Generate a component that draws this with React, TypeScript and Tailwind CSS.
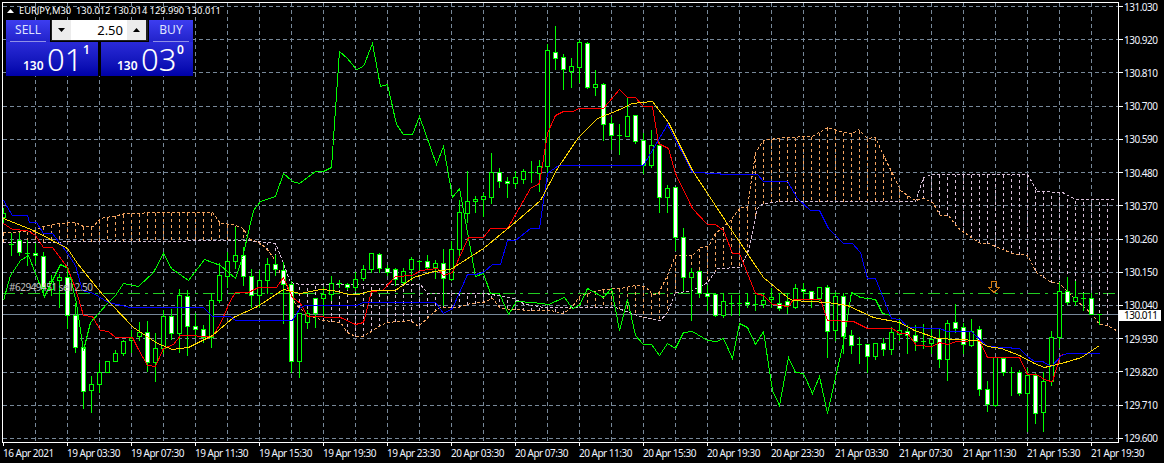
type Pt = [number, number];

// x, high, body top, body bottom, low, white body
const candles: [number, number, number, number, number, number][] = [
  [3, 208, 213, 217, 222, 0], [11, 233, 244, 244, 255, 0], [19, 233, 240, 252, 255, 1], [27, 240, 253, 253, 265, 0],
  [35, 243, 253, 255, 263, 1], [43, 252, 256, 287, 295, 1], [51, 275, 281, 289, 295, 0], [59, 274, 277, 280, 307, 0],
  [67, 267, 277, 315, 328, 1], [75, 303, 315, 347, 352, 1], [83, 347, 347, 391, 408, 1], [91, 376, 384, 390, 412, 0],
  [99, 363, 372, 384, 392, 0], [107, 361, 361, 372, 372, 0], [115, 350, 353, 361, 361, 0], [123, 340, 341, 353, 355, 0],
  [131, 330, 338, 340, 352, 0], [139, 322, 332, 336, 340, 0], [147, 321, 332, 362, 371, 1], [155, 333, 348, 362, 381, 0],
  [163, 310, 316, 348, 353, 0], [171, 309, 316, 333, 339, 1], [179, 289, 295, 333, 352, 0], [187, 290, 296, 326, 355, 1],
  [195, 313, 326, 329, 337, 1], [203, 325, 329, 337, 342, 1], [211, 293, 300, 337, 347, 0], [219, 263, 275, 300, 302, 0],
  [227, 252, 261, 276, 287, 0], [235, 227, 255, 261, 268, 0], [243, 247, 255, 276, 285, 1], [251, 269, 276, 295, 307, 1],
  [259, 270, 280, 295, 307, 0], [267, 258, 264, 280, 293, 0], [275, 255, 264, 269, 275, 1], [283, 262, 270, 284, 323, 1],
  [291, 281, 284, 361, 372, 1], [299, 313, 313, 361, 377, 0], [307, 310, 313, 322, 328, 0], [315, 298, 298, 313, 327, 1],
  [323, 287, 294, 298, 315, 0], [331, 276, 283, 294, 300, 0], [339, 280, 283, 283, 287, 0], [347, 283, 284, 287, 289, 1],
  [355, 272, 279, 287, 290, 0], [363, 265, 269, 278, 280, 0], [371, 253, 253, 269, 272, 0], [379, 253, 254, 268, 272, 1],
  [387, 265, 268, 272, 275, 1], [395, 268, 269, 279, 285, 1], [403, 268, 271, 282, 283, 0], [411, 257, 259, 269, 280, 0],
  [419, 260, 261, 261, 269, 0], [427, 255, 261, 267, 269, 1], [435, 260, 263, 267, 278, 0], [443, 249, 263, 278, 305, 1],
  [451, 241, 249, 279, 280, 0], [459, 200, 212, 249, 255, 0], [467, 171, 201, 213, 222, 0], [475, 196, 199, 201, 212, 0],
  [483, 193, 196, 199, 216, 0], [491, 153, 172, 197, 203, 0], [499, 168, 172, 181, 187, 1], [507, 177, 181, 183, 197, 1],
  [515, 171, 177, 183, 187, 0], [523, 169, 171, 179, 183, 0], [531, 161, 172, 172, 182, 0], [539, 160, 166, 173, 191, 0],
  [547, 44, 50, 166, 173, 0], [555, 26, 52, 58, 69, 1], [563, 54, 57, 69, 89, 1], [571, 58, 66, 71, 87, 0],
  [579, 40, 42, 67, 82, 0], [587, 42, 43, 87, 88, 1], [595, 70, 84, 87, 95, 0], [603, 83, 84, 124, 140, 1],
  [611, 117, 123, 135, 149, 1], [619, 124, 135, 135, 154, 0], [627, 98, 116, 136, 136, 0], [635, 115, 115, 141, 143, 1],
  [643, 133, 140, 165, 173, 1], [651, 130, 145, 165, 167, 0], [659, 142, 145, 197, 212, 1], [667, 185, 188, 197, 212, 0],
  [675, 187, 187, 237, 250, 1], [683, 228, 237, 277, 290, 1], [691, 268, 272, 277, 320, 0], [699, 270, 271, 293, 297, 1],
  [707, 285, 293, 296, 310, 1], [715, 293, 294, 315, 316, 1], [723, 293, 301, 315, 317, 0], [731, 295, 303, 303, 315, 0],
  [739, 295, 303, 303, 315, 0], [747, 293, 302, 304, 307, 1], [755, 295, 304, 304, 310, 0], [763, 293, 300, 304, 307, 0],
  [771, 288, 297, 299, 307, 0], [779, 293, 303, 308, 310, 1], [787, 293, 301, 305, 313, 1], [795, 284, 288, 307, 308, 0],
  [803, 283, 289, 291, 298, 1], [811, 291, 291, 299, 307, 1], [819, 287, 287, 298, 300, 0], [827, 285, 287, 331, 357, 1],
  [835, 292, 296, 330, 340, 0], [843, 293, 296, 336, 353, 1], [851, 330, 335, 345, 353, 1], [859, 337, 344, 344, 363, 0],
  [867, 344, 344, 356, 372, 1], [875, 343, 343, 356, 359, 0], [883, 338, 343, 349, 355, 1], [891, 327, 332, 349, 354, 0],
  [899, 318, 330, 334, 340, 0], [907, 325, 331, 335, 353, 1], [915, 325, 335, 341, 350, 1], [923, 324, 341, 341, 348, 0],
  [931, 328, 339, 343, 353, 0], [939, 328, 338, 359, 367, 1], [947, 320, 323, 359, 380, 0], [955, 304, 322, 328, 332, 1],
  [963, 323, 327, 344, 353, 1], [971, 319, 331, 345, 346, 0], [979, 326, 329, 389, 395, 1], [987, 381, 389, 404, 411, 1],
  [995, 357, 357, 405, 406, 0], [1003, 358, 358, 372, 375, 1], [1011, 367, 372, 372, 395, 0], [1019, 370, 372, 393, 395, 1],
  [1027, 368, 375, 393, 431, 0], [1035, 373, 375, 413, 423, 1], [1043, 372, 381, 412, 431, 0], [1051, 331, 337, 381, 385, 0],
  [1059, 282, 291, 337, 347, 0], [1067, 277, 291, 302, 304, 1], [1075, 281, 297, 301, 305, 0], [1083, 293, 298, 298, 310, 0],
  [1091, 293, 298, 314, 314, 1], [1099, 314, 314, 314, 324, 0],
];

const blue: Pt[] = [
  [3, 200], [12, 215], [27, 215], [29, 222], [36, 222], [43, 233], [52, 233], [65, 250], [75, 265], [82, 290], [93, 293], [108, 302], [130, 307], [203, 307], [212, 316], [230, 316], [235, 320], [292, 320], [300, 307], [305, 305], [357, 305], [362, 302], [435, 302], [443, 313], [452, 308], [467, 274], [475, 274], [483, 272], [492, 264], [500, 264], [507, 240], [515, 240], [530, 228], [539, 228], [547, 173], [558, 165], [643, 165], [667, 124], [692, 172], [717, 173], [723, 174], [757, 174], [763, 181], [787, 181], [797, 198], [810, 210], [819, 210], [828, 228], [843, 243], [852, 243], [860, 252], [867, 278], [875, 278], [891, 318], [900, 319], [907, 327], [939, 328], [947, 331], [971, 331], [987, 346], [1019, 348], [1027, 356], [1034, 361], [1042, 361], [1051, 366], [1061, 355], [1067, 353], [1099, 353],
];

const red: Pt[] = [
  [3, 223], [12, 229], [27, 230], [35, 235], [43, 247], [52, 247], [67, 267], [75, 288], [83, 315], [92, 316], [100, 330], [108, 331], [115, 337], [132, 337], [137, 347], [147, 365], [155, 366], [163, 348], [173, 344], [180, 335], [212, 336], [220, 323], [230, 300], [235, 292], [248, 292], [258, 287], [276, 287], [283, 277], [292, 297], [300, 303], [307, 316], [340, 317], [355, 324], [363, 322], [371, 291], [382, 290], [395, 276], [412, 275], [420, 270], [437, 268], [443, 275], [452, 272], [468, 237], [483, 237], [490, 228], [507, 228], [530, 188], [539, 183], [547, 133], [555, 115], [563, 111], [572, 111], [579, 108], [603, 108], [619, 89], [627, 97], [635, 97], [643, 106], [652, 106], [658, 143], [668, 148], [675, 173], [692, 208], [707, 224], [715, 224], [723, 230], [732, 253], [739, 253], [755, 293], [763, 295], [772, 304], [788, 306], [793, 299], [820, 299], [827, 320], [853, 321], [867, 328], [892, 328], [899, 333], [907, 333], [916, 345], [932, 346], [939, 342], [947, 344], [956, 341], [979, 340], [987, 357], [1019, 357], [1027, 374], [1036, 374], [1046, 380], [1052, 381], [1060, 355], [1067, 353], [1099, 353],
];

const gold: Pt[] = [
  [3, 218], [33, 230], [67, 248], [77, 263], [97, 288], [110, 303], [133, 327], [157, 343], [172, 349], [188, 347], [212, 335], [233, 317], [257, 306], [283, 289], [300, 293], [320, 289], [333, 290], [348, 294], [358, 294], [372, 290], [395, 290], [413, 277], [433, 271], [450, 269], [483, 248], [517, 220], [540, 200], [557, 168], [578, 137], [597, 118], [617, 110], [632, 103], [652, 101], [668, 122], [692, 170], [730, 228], [763, 277], [787, 297], [792, 300], [827, 302], [847, 305], [873, 317], [899, 322], [914, 330], [937, 338], [977, 340], [987, 346], [1001, 348], [1019, 355], [1034, 363], [1044, 367], [1052, 365], [1061, 363], [1081, 357], [1099, 345],
];

const chikou: Pt[] = [
  [3, 300], [10, 275], [20, 260], [28, 255], [44, 296], [60, 264], [68, 268], [76, 303], [83, 350], [90, 322], [107, 303], [115, 295], [123, 283], [138, 286], [153, 272], [163, 253], [171, 268], [188, 280], [204, 259], [220, 265], [235, 278], [242, 257], [253, 210], [260, 201], [275, 196], [283, 173], [292, 181], [299, 183], [315, 171], [323, 171], [331, 167], [339, 51], [347, 58], [356, 69], [363, 66], [372, 43], [380, 86], [387, 84], [396, 124], [403, 134], [412, 134], [419, 116], [436, 164], [443, 146], [452, 197], [459, 188], [475, 276], [483, 273], [490, 293], [499, 293], [508, 314], [516, 301], [532, 302], [548, 304], [564, 297], [572, 308], [579, 305], [587, 288], [603, 297], [611, 288], [619, 330], [627, 299], [635, 335], [643, 344], [651, 344], [659, 355], [667, 343], [675, 348], [683, 332], [692, 331], [707, 340], [716, 341], [723, 338], [732, 358], [739, 323], [747, 327], [755, 344], [763, 331], [772, 390], [779, 405], [788, 357], [795, 372], [803, 373], [812, 393], [819, 376], [827, 413], [835, 377], [843, 342], [851, 292], [860, 297], [875, 299], [882, 313], [891, 315],
];

const spanA: Pt[] = [
  [3, 232], [33, 231], [42, 226], [58, 223], [75, 222], [83, 226], [93, 226], [100, 218], [117, 215], [125, 213], [163, 212], [212, 212], [220, 223], [233, 224], [243, 228], [248, 238], [258, 242], [265, 247], [273, 257], [283, 280], [296, 305], [310, 316], [323, 320], [340, 322], [347, 332], [355, 336], [363, 336], [380, 325], [387, 322], [410, 320], [418, 326], [433, 312], [440, 307], [458, 307], [470, 303], [483, 302], [492, 298], [500, 308], [530, 310], [550, 310], [563, 313], [572, 306], [580, 295], [602, 289], [620, 288], [635, 285], [645, 286], [652, 294], [658, 293], [667, 275], [675, 255], [692, 255], [700, 247], [708, 246], [715, 233], [730, 220], [740, 207], [747, 207], [755, 152], [763, 140], [783, 137], [812, 136], [827, 127], [843, 132], [852, 133], [858, 129], [867, 138], [875, 137], [883, 155], [892, 173], [900, 190], [907, 195], [915, 200], [923, 198], [932, 202], [940, 215], [948, 215], [957, 227], [972, 238], [980, 243], [988, 243], [1012, 253], [1027, 255], [1036, 272], [1051, 282], [1059, 283], [1076, 300], [1091, 313], [1099, 324], [1107, 325], [1116, 330],
];

const spanB: Pt[] = [
  [3, 242], [248, 240], [275, 243], [283, 263], [290, 282], [300, 284], [420, 284], [423, 288], [428, 293], [485, 293], [497, 295], [513, 298], [523, 303], [543, 307], [615, 307], [640, 316], [660, 320], [667, 312], [675, 292], [690, 291], [707, 282], [717, 268], [740, 267], [748, 250], [757, 208], [763, 203], [780, 201], [915, 201], [923, 177], [932, 174], [1027, 174], [1037, 191], [1062, 192], [1075, 199], [1115, 199],
];

const priceLabels = ["131.030", "130.920", "130.810", "130.700", "130.590", "130.480", "130.370", "130.260", "130.150", "130.040", "129.930", "129.820", "129.710", "129.600"];
const timeLabels = ["16 Apr 2021", "19 Apr 03:30", "19 Apr 07:30", "19 Apr 11:30", "19 Apr 15:30", "19 Apr 19:30", "19 Apr 23:30", "20 Apr 03:30", "20 Apr 07:30", "20 Apr 11:30", "20 Apr 15:30", "20 Apr 19:30", "20 Apr 23:30", "21 Apr 03:30", "21 Apr 07:30", "21 Apr 11:30", "21 Apr 15:30", "21 Apr 19:30"];

const toPoints = (pts: Pt[]) => pts.map(([x, y]) => `${x + 0.5},${y + 0.5}`).join(" ");

function valueAt(pts: Pt[], x: number) {
  for (let i = 1; i < pts.length; i++) {
    if (x <= pts[i][0]) {
      const [x0, y0] = pts[i - 1];
      const [x1, y1] = pts[i];
      return y0 + ((y1 - y0) * (x - x0)) / (x1 - x0);
    }
  }
  return pts[pts.length - 1][1];
}

const hatchX = Array.from({ length: 139 }, (_, k) => 3 + 8 * k);
const gridX = Array.from({ length: 35 }, (_, k) => 35.5 + 32 * k);
const gridY = Array.from({ length: 14 }, (_, k) => Math.round(6 + 33.23 * k) + 0.5);

function Chart() {
  return (
    <svg className="block" width={1115} height={439} viewBox="3 3 1115 439" shapeRendering="crispEdges" fill="none">
      {gridX.map((x) => (
        <line key={x} x1={x} x2={x} y1={3} y2={442} stroke="#778899" strokeDasharray="4 3" />
      ))}
      {gridY.map((y) => (
        <line key={y} x1={3} x2={1118} y1={y} y2={y} stroke="#778899" strokeDasharray="4 3" />
      ))}
      <line x1={3} x2={1118} y1={293.5} y2={293.5} stroke="#22cc22" strokeDasharray="12 5 3 5" />
      <line x1={3} x2={1118} y1={314.5} y2={314.5} stroke="#778899" />
      {hatchX.map((x) => {
        const a = valueAt(spanA, x);
        const b = valueAt(spanB, x);
        return (
          <line key={x} x1={x + 0.5} x2={x + 0.5} y1={Math.round(a) + 0.5} y2={Math.round(b) + 0.5} stroke={a < b ? "#f4a460" : "#d8bfd8"} strokeDasharray="3 3" />
        );
      })}
      <polyline points={toPoints(spanA)} stroke="#f4a460" strokeDasharray="3 2" />
      <polyline points={toPoints(spanB)} stroke="#d8bfd8" strokeDasharray="3 2" />
      {candles.map(([x, hi, top, bot, lo, white]) => (
        <g key={x} stroke="#00ff00">
          <line x1={x + 0.5} x2={x + 0.5} y1={hi} y2={lo + 1} />
          {top === bot ? (
            <line x1={x - 2} x2={x + 3} y1={top + 0.5} y2={top + 0.5} />
          ) : (
            <rect x={x - 1.5} y={top + 0.5} width={4} height={bot - top} fill={white ? "#ffffff" : "#000000"} />
          )}
        </g>
      ))}
      <polyline points={toPoints(chikou)} stroke="#00ff00" />
      <polyline points={toPoints(red)} stroke="#ff0000" />
      <polyline points={toPoints(blue)} stroke="#0000ff" />
      <polyline points={toPoints(gold)} stroke="#ffd700" />
      <path d="M991.5 281.5h5v6h3l-5.5 5-5.500-5h3z" stroke="#d07a10" />
    </svg>
  );
}

function PriceBox({ big, small, left }: { big: string; small: string; left: string }) {
  return (
    <div className={`flex h-[34px] w-[92px] items-start bg-gradient-to-b from-[#2a2ad8] to-[#0000a8] tracking-normal text-white ${left}`}>
      <span className="mt-[16px] w-[24px] flex-none text-[12px] leading-[16px] font-semibold">130</span>
      <span className="w-[36px] flex-none text-[31px] leading-[34px] font-light">{big}</span>
      <span className="mt-[1px] text-[12px] leading-[14px] font-semibold">{small}</span>
    </div>
  );
}

function TradeButton({ label }: { label: string }) {
  return (
    <div className="flex h-[23px] w-[44px] flex-col items-center bg-gradient-to-b from-[#3d3df0] to-[#2020c8] text-[12px] leading-[20px] tracking-normal text-[#dfe2ff]">
      <span className="h-[21px]">{label}</span>
      <span className="h-px w-[36px] bg-[#8f8fe8]" />
    </div>
  );
}

function SpinButton({ up }: { up?: boolean }) {
  return (
    <div className="flex h-[20px] w-[19px] items-center justify-center bg-[#ececec]">
      <svg width={7} height={4} viewBox="0 0 7 4">
        <path d={up ? "M3.5 0 7 4H0z" : "M0 0h7L3.500 4z"} fill="#000000" />
      </svg>
    </div>
  );
}

function TradePanel() {
  return (
    <div className="absolute top-[17px] left-[3px] flex w-[187px] flex-col bg-[#000000]">
      <div className="flex h-[22px] items-start justify-between">
        <TradeButton label="SELL" />
        <div className="flex h-[21px] w-[97px] items-start bg-[#202020] px-px">
          <SpinButton />
          <div className="h-[20px] w-[56px] bg-white pr-[4px] text-right text-[13px] leading-[20px] tracking-normal text-black">2.50</div>
          <SpinButton up />
        </div>
        <TradeButton label="BUY" />
      </div>
      <div className="flex justify-between">
        <PriceBox big="01" small="1" left="pl-[17px]" />
        <PriceBox big="03" small="0" left="pl-[16px]" />
      </div>
    </div>
  );
}

export default function App() {
  return (
    <div className="h-[463px] w-[1164px] overflow-hidden bg-black text-[10px] tracking-[-0.5px] text-white" style={{ fontFamily: '"Noto Sans", sans-serif' }}>
      <div className="flex h-[443px] pt-[2px] pl-[2px]">
        <div className="relative h-[441px] w-[1117px] flex-none border border-white">
          <Chart />
          <div className="absolute top-[1px] left-[4px] flex items-center gap-[5px] text-[9.3px] leading-[14px] tracking-normal whitespace-pre">
            <svg width={7} height={4} viewBox="0 0 7 4">
              <path d="M3.5 0 7 4H0z" fill="#ffffff" />
            </svg>
            <span>EURJPY,M30  130.012 130.014 129.990 130.011</span>
          </div>
          <TradePanel />
          <div className="absolute top-[277px] left-[6px] leading-[14px] text-[#c0c0c0]">#62949451 sell 2.50</div>
        </div>
        <div className="relative -mt-[12.1px] flex flex-col">
          {priceLabels.map((label) => (
            <div key={label} className="flex h-[33.23px] flex-none items-center">
              <span className="h-px w-[4px] bg-white" />
              <span className="ml-[1px] leading-[14px] text-[#f0f4ff]">{label}</span>
            </div>
          ))}
          <div className="absolute top-[320px] left-0 h-[11px] w-[42px] bg-white pl-[5px] leading-[11px] text-black">130.011</div>
        </div>
      </div>
      <div className="flex pl-[3px]">
        {timeLabels.map((label) => (
          <div key={label} className="flex w-[64px] flex-none flex-col">
            <span className="h-[3px] w-px bg-white" />
            <span className="leading-[14px] whitespace-pre text-[#f0f4ff]">{label}</span>
          </div>
        ))}
      </div>
    </div>
  );
}
